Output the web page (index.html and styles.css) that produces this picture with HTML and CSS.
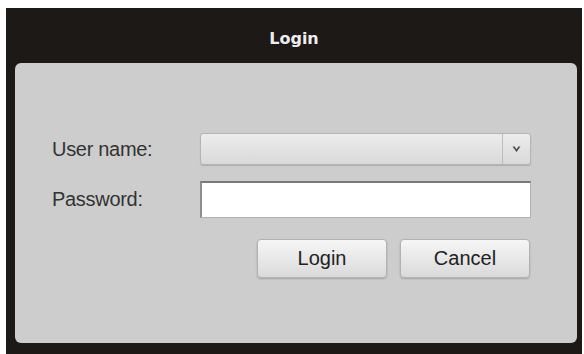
FILE: index.html
```html
<!DOCTYPE html>
<html lang="en">
<head>
  <meta charset="UTF-8" />
  <title>Login</title>
  <link rel="stylesheet" href="styles.css">
</head>
<body>
  <div class="window">
    <div class="title-bar">Login</div>
    <div class="panel">
      <div class="form">
        <label class="label" for="user">User name:</label>
        <div class="select" id="user">
          <span class="select-value"></span>
          <span class="select-arrow">
            <svg width="9" height="7" viewBox="0 0 9 7"><path d="M0.5 0.5 L4.5 6 L8.5 0.5 L6.5 0.5 L4.5 3.2 L2.5 0.5 Z" fill="#4a4a4a"/></svg>
          </span>
        </div>
        <label class="label" for="pass">Password:</label>
        <input class="input" type="password" id="pass">
      </div>
      <div class="actions">
        <button class="btn">Login</button>
        <button class="btn">Cancel</button>
      </div>
    </div>
  </div>
</body>
</html>
```

FILE: styles.css
```css
body {
  margin: 0;
  background: #ffffff;
  font-family: "Liberation Sans", Arial, sans-serif;
  overflow: hidden;
}
.window {
  margin: 8px 2px 0 6px;
  height: 346px;
  background: #1d1917;
  padding: 0 5px 11px 9px;
  box-sizing: border-box;
  display: flex;
  flex-direction: column;
}
.title-bar {
  height: 55px;
  box-sizing: border-box;
  padding: 7px 4px 0 0;
  line-height: 48px;
  text-align: center;
  color: #eeeeee;
  font-family: "DejaVu Sans", sans-serif;
  font-weight: bold;
  font-size: 16px;
}
.panel {
  flex: 1;
  background: #cdcdcd;
  border-radius: 6px;
  padding: 70px 0 0 37px;
  box-sizing: border-box;
}
.form {
  display: grid;
  grid-template-columns: 148px 331px;
  grid-template-rows: 32px 37px;
  row-gap: 16px;
  align-items: center;
}
.label {
  font-size: 20px;
  color: #333333;
  letter-spacing: -0.3px;
}
.select {
  height: 32px;
  box-sizing: border-box;
  border: 1px solid #b4b4b4;
  border-radius: 3px;
  background: linear-gradient(#ececec, #d9d9d9);
  display: flex;
  box-shadow: 0 1px 1px rgba(0, 0, 0, 0.15);
}
.select-value {
  flex: 1;
}
.select-arrow {
  width: 27px;
  border-left: 1px solid #bdbdbd;
  display: flex;
  align-items: center;
  justify-content: center;
}
.input {
  height: 37px;
  box-sizing: border-box;
  margin: 0;
  border: 1px solid #b0b0b0;
  border-top: 2px solid #7a7a7a;
  border-left: 2px solid #8e8e8e;
  background: #ffffff;
  width: 331px;
}
.actions {
  display: flex;
  gap: 13px;
  margin: 21px 0 0 205px;
}
.btn {
  width: 130px;
  height: 39px;
  font-family: "Liberation Sans", Arial, sans-serif;
  font-size: 20px;
  color: #222222;
  background: linear-gradient(#f6f6f6, #dadada);
  border: 1px solid #b2b2b2;
  border-radius: 4px;
  box-shadow: 0 1px 2px rgba(0, 0, 0, 0.2);
  padding: 0;
}
```
